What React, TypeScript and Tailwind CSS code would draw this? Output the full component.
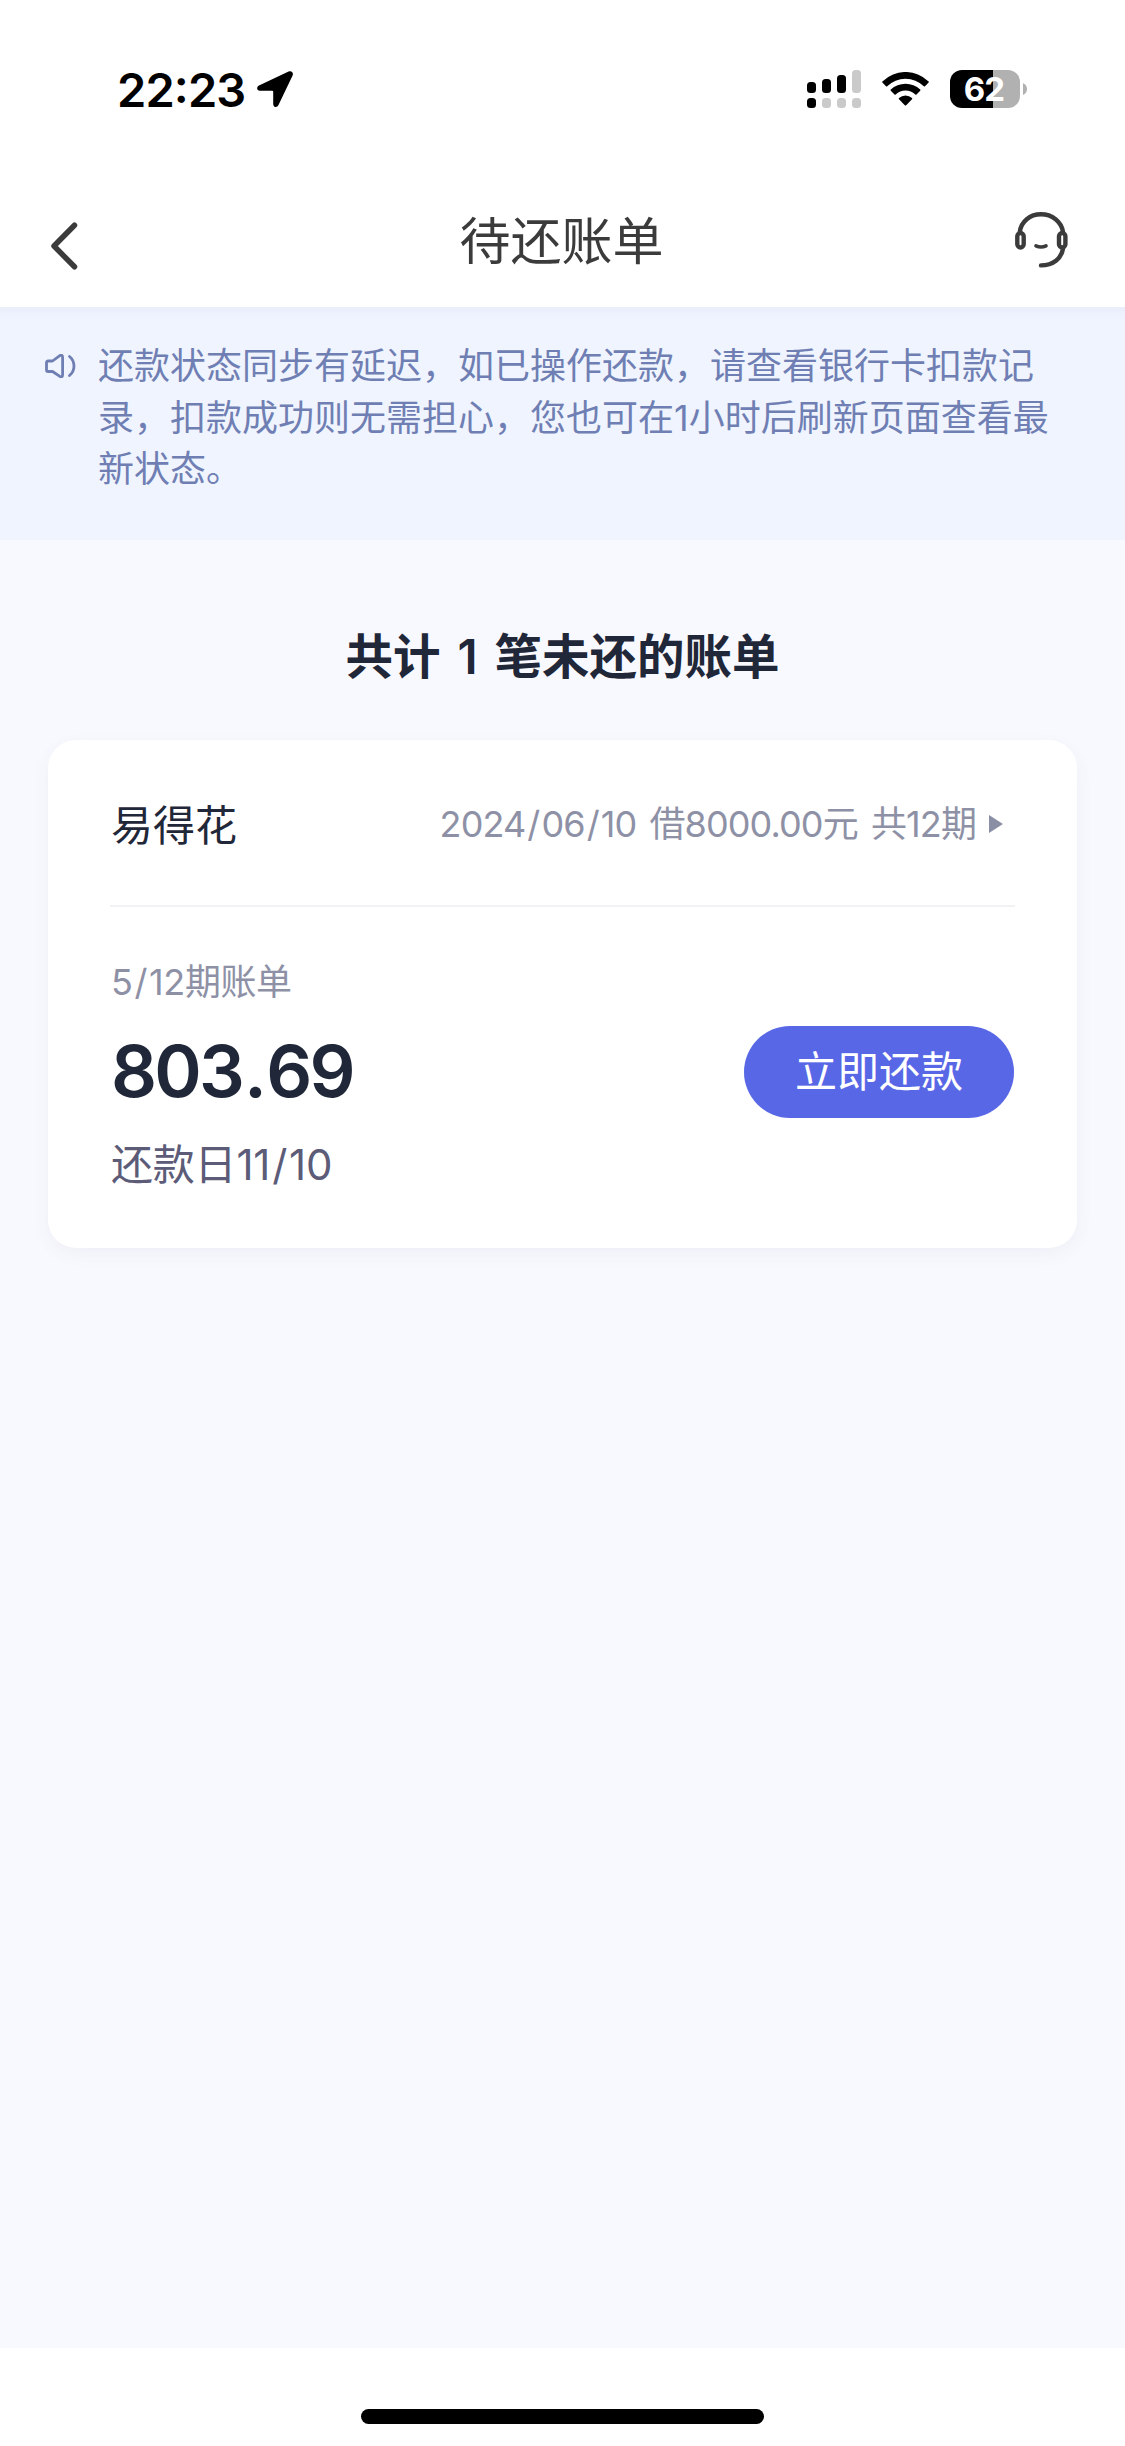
import { Fragment } from "react";

const noticeLines = [
  "还款状态同步有延迟，如已操作还款，请查看银行卡扣款记",
  "录，扣款成功则无需担心，您也可在1小时后刷新页面查看最",
  "新状态。",
];

const bill = {
  product: "易得花",
  summary: "2024/06/10 借8000.00元 共12期",
  period: "5/12期账单",
  amount: "803.69",
  dueDate: "还款日11/10",
};

function LocationIcon() {
  return (
    <svg className="h-9 w-9" viewBox="0 0 36 36" fill="#000">
      <path d="M31.6.5 2 14.5C-.9 16.1-.2 19.7 2.9 19.7H15.2q1 0 1 1V32.9c0 3.5 3.9 4.2 5.3 1.2L35.6 4.4C36.8 1.7 34.2-.8 31.6.5Z" />
    </svg>
  );
}

function SignalIcon() {
  return (
    <svg className="h-[38px] w-[55px]" viewBox="0 0 55 38">
      <g fill="#000">
        <rect x="0" y="12" width="9" height="11" rx="3.5" />
        <rect x="15" y="9" width="9" height="14" rx="3.5" />
        <rect x="30" y="5" width="9" height="18" rx="3.5" />
        <rect x="0" y="28" width="9" height="10" rx="3.5" />
      </g>
      <g fill="#cacaca">
        <rect x="45" y="0" width="9" height="23" rx="3.5" />
        <rect x="15" y="28" width="9" height="10" rx="3.5" />
        <rect x="30" y="28" width="9" height="10" rx="3.5" />
        <rect x="45" y="28" width="9" height="10" rx="3.5" />
      </g>
    </svg>
  );
}

function WifiIcon() {
  return (
    <svg className="h-[34px] w-[47px]" viewBox="0 0 47 34" fill="#000">
      <path d="M.4 9.4a33 33 0 0 1 46.2 0q.6.6 0 1.2L43 14.2q-.6.6-1.2 0a26.2 26.2 0 0 0-36.6 0q-.6.6-1.2 0L.4 10.6q-.6-.6 0-1.2Z" />
      <path d="M8.8 17.6a21.2 21.2 0 0 1 29.4 0q.6.6 0 1.2l-3.7 3.7q-.6.6-1.2 0a14.3 14.3 0 0 0-19.6 0q-.6.6-1.2 0l-3.7-3.7q-.6-.6 0-1.2Z" />
      <path d="M17 26a9.6 9.6 0 0 1 13 0q.6.6 0 1.2l-5.8 6q-.7.7-1.4 0l-5.8-6q-.6-.6 0-1.2Z" />
    </svg>
  );
}

function Battery() {
  return (
    <div className="flex items-center">
      <div className="flex h-[38px] w-[70px] items-center justify-center rounded-[12px] bg-linear-to-r from-black from-[62%] to-[#b1b1b1] to-[62%]">
        <span className="pr-[2px] text-[33px] leading-none font-bold tracking-[-0.8px] text-white">62</span>
      </div>
      <svg className="ml-[3px] h-3 w-1" viewBox="0 0 4 12" fill="#b1b1b1">
        <path d="M0 0Q4 2 4 6T0 12Z" />
      </svg>
    </div>
  );
}

function StatusBar() {
  return (
    <div className="flex h-[178px] items-start justify-between pt-[70px] pr-[98px] pl-[117px]">
      <div className="flex h-[38px] items-center">
        <span className="mb-1 w-[140px] text-[47px] leading-none font-semibold tracking-[-0.9px] text-black">
          22<span className="align-[4px] leading-none">:</span>23
        </span>
        <LocationIcon />
      </div>
      <div className="flex h-[38px] items-center">
        <SignalIcon />
        <span className="w-5" />
        <WifiIcon />
        <span className="w-[21px]" />
        <Battery />
      </div>
    </div>
  );
}

function BackIcon() {
  return (
    <svg className="h-12 w-7" viewBox="0 0 28 48" fill="none" stroke="#3b3b3b" strokeWidth="5.5" strokeLinecap="round" strokeLinejoin="round">
      <path d="M24.5 3.2 4 24 24.5 44.8" />
    </svg>
  );
}

function HeadsetIcon() {
  return (
    <svg className="h-14 w-[53px]" viewBox="0 0 53 56" fill="none" stroke="#3b3b3b" strokeWidth="4.4" strokeLinecap="round">
      <path d="M4.8 20C6 9.5 15 2.3 26 2.3S46.5 9.5 48 20" />
      <path d="M48 36.5C46.5 46.5 38 53.4 26 53.4" />
      <rect x="2.3" y="21" width="6.4" height="14.5" rx="3.2" />
      <rect x="44" y="21" width="6.4" height="14.5" rx="3.2" />
      <path d="M21 33.8Q26 36.3 31 33.8" strokeWidth="3.6" />
    </svg>
  );
}

function NavBar() {
  return (
    <header className="flex h-[129px] items-start justify-between pr-[57px] pl-[50px]">
      <button className="mt-[44px] w-[58px]" type="button">
        <BackIcon />
      </button>
      <h1 className="mt-[28px] text-[51px] leading-[72px] font-normal text-[#3b3b3b]">待还账单</h1>
      <button className="mt-[34px]" type="button">
        <HeadsetIcon />
      </button>
    </header>
  );
}

function SpeakerIcon() {
  return (
    <svg className="h-6 w-[31px] shrink-0" viewBox="0 0 31 24" fill="none" stroke="#6f7fb3" strokeWidth="2.8" strokeLinecap="round" strokeLinejoin="round">
      <path d="M3.2 7H7.5L14.5 1.8Q17.6 0 17.6 3.2V20.8Q17.6 24 14.5 22.2L7.5 17.5H3.2Q1.5 17.5 1.5 15.7V8.8Q1.5 7 3.2 7Z" />
      <path d="M24.5 2.5C30.5 7.5 30.5 16.5 24.5 21.5" />
    </svg>
  );
}

function Notice() {
  return (
    <section className="flex h-[233px] bg-[#f0f4ff] pt-[34px] pl-[45px] shadow-[inset_0_12px_12px_-10px_#e4e9f6]">
      <div className="flex h-[49px] items-center">
        <SpeakerIcon />
      </div>
      <div className="ml-[22px] text-[36px] leading-[51.5px] font-normal whitespace-nowrap text-[#6f7fb3]">
        {noticeLines.map((line) => (
          <p key={line}>{line}</p>
        ))}
      </div>
    </section>
  );
}

// Gives the slashes of a date or a fraction some air on both sides.
function Spaced({ text }: { text: string }) {
  return (
    <span>
      {text.split("/").map((part, i) => (
        <Fragment key={i}>
          {i > 0 && <span className="mx-[2px]">/</span>}
          {part}
        </Fragment>
      ))}
    </span>
  );
}

function BillCard() {
  const [whole, cents] = bill.amount.split(".");

  return (
    <article className="mx-12 h-[508px] rounded-[28px] bg-white px-[62px] shadow-[0_6px_18px_rgba(60,70,120,0.05)]">
      <div className="flex h-[167px] items-center justify-between border-b-2 border-[#f2f2f4] pt-[3px] pr-[12px]">
        <h3 className="pt-[2px] pl-px text-[42px] font-normal text-[#1f2738]">{bill.product}</h3>
        <div className="flex items-center text-[36px] font-normal tracking-[-0.9px] text-[#8e91a6] [word-spacing:4px]">
          <Spaced text={bill.summary} />
          <svg className="ml-[13px] h-[18px] w-[14px]" viewBox="0 0 14 18" fill="#8b8fa5">
            <path d="M0 0 14 9 0 18Z" />
          </svg>
        </div>
      </div>
      <p className="mt-[49px] pl-px text-[36px] leading-[52px] font-normal tracking-[-0.4px] text-[#8e91a6]">
        <Spaced text={bill.period} />
      </p>
      <div className="mt-[18px] flex h-[92px] items-center justify-between pr-px">
        <span className="pb-[3px] pl-px text-[72px] leading-none font-semibold tracking-[-2.8px] text-[#1f2738]">
          {whole}
          <span className="mx-[2px]">.</span>
          {cents}
        </span>
        <button className="h-[92px] w-[270px] rounded-full bg-[#5867e6] text-[42px] leading-none font-normal text-white" type="button">
          立即还款
        </button>
      </div>
      <p className="mt-[17px] pl-px text-[42px] leading-[60px] font-normal tracking-[-0.2px] text-[#5c5b78]">
        <Spaced text={bill.dueDate} />
      </p>
    </article>
  );
}

export default function App() {
  return (
    <div className="flex h-[2446px] w-[1125px] flex-col bg-white font-['Inter','Noto_Sans_CJK_SC',sans-serif]">
      <StatusBar />
      <NavBar />
      <main className="flex-1 bg-[#f8f9fe]">
        <Notice />
        <h2 className="flex h-[200px] items-center justify-center pt-[34px] text-[47.5px] font-semibold text-[#1f2738] [word-spacing:5px]">
          共计 1 笔未还的账单
        </h2>
        <BillCard />
      </main>
      <footer className="flex h-[98px] justify-center pt-[61px]">
        <div className="h-[15px] w-[403px] rounded-full bg-black" />
      </footer>
    </div>
  );
}
